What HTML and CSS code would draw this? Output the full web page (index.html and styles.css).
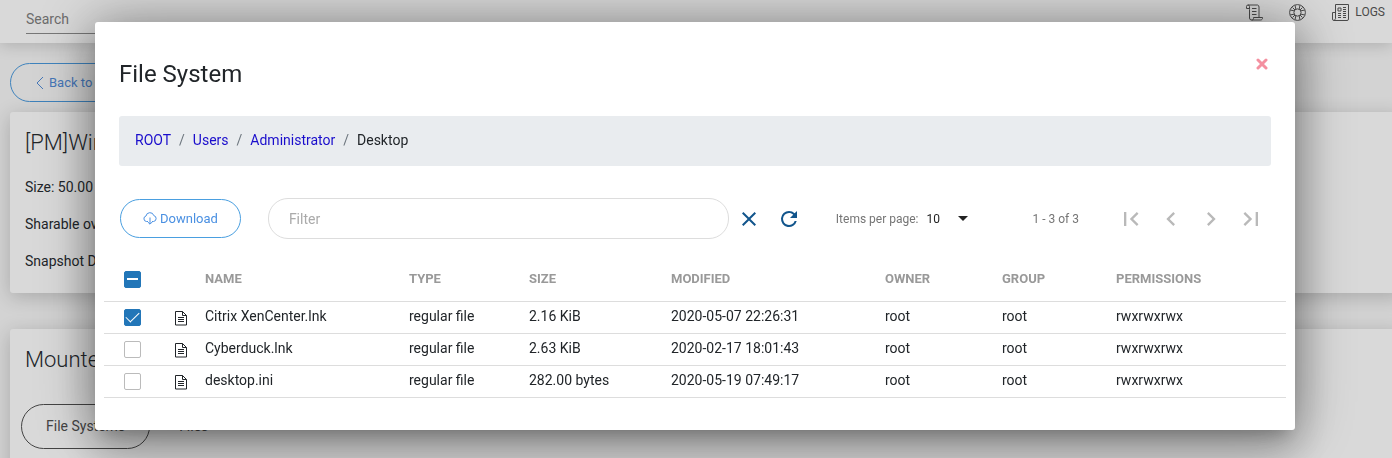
FILE: index.html
```html
<!DOCTYPE html>
<html lang="en">
<head>
<meta charset="utf-8">
<title>File System</title>
<link rel="stylesheet" href="styles.css">
</head>
<body>
<div class="page">
  <header class="topbar">
    <input class="search" type="text" placeholder="Search" aria-label="Search">
    <nav class="topnav">
      <a href="#" class="navlink" aria-label="Jobs"><svg width="17" height="17" viewBox="0 0 17 17"><path d="M3.500 5.500V2.500a1.500 1.500 0 0 0-3 0v2h3M2 1h9.500a2 2 0 0 1 1.500 2v10M3.500 5.500v8.500a2 2 0 0 0 2 2h9a2 2 0 0 0 2-2.500H7.500v1a1.500 1.500 0 0 1-2 1.500M6 4.500h4.500M6 7.500h4.500M6 10.500h4.500"/></svg></a>
      <a href="#" class="navlink" aria-label="Support"><svg width="17" height="17" viewBox="0 0 17 17"><circle cx="8.500" cy="8.500" r="7.900"/><circle cx="8.500" cy="8.500" r="3.600"/><path d="M6 1.200l.8 3.800M1.200 6l3.800.8M11 1.200l-.8 3.800M15.800 6l-3.800.8M6 15.800l.8-3.800M1.200 11l3.800-.8M11 15.800l-.8-3.800M15.800 11l-3.800-.8M3.500 3.500l2.500 2.500M13.500 3.500l-2.500 2.500M3.500 13.500l2.500-2.500M13.500 13.500l-2.500-2.500"/></svg></a>
      <a href="#" class="navlink"><svg width="17" height="17" viewBox="0 0 17 17"><path d="M3.500 14V.5h13v14.500a1.500 1.500 0 0 1-1.500 1.500H2A1.500 1.500 0 0 1 .5 15V8.500h3M3.500 14a1.500 1.500 0 0 1-1.500 2M6 4h3v3H6zM11 3.500h3M11 5.500h3M11 7.500h3M6 9.500h3M11 9.500h3M6 11.500h3M11 11.500h3M6 13.500h3M11 13.500h3"/></svg>LOGS</a>
    </nav>
  </header>
  <main class="content">
    <button class="pill back" type="button"><svg width="8" height="14" viewBox="0 0 8 14"><path d="M7 1L1 7l6 6"/></svg>Back to list</button>
    <section class="card summary">
      <h2>[PM]Win</h2>
      <p>Size: 50.00 GiB</p>
      <p>Sharable over</p>
      <p>Snapshot Date</p>
    </section>
    <section class="card mounted">
      <h2>Mounted</h2>
      <div class="tabs">
        <button class="tab active" type="button">File Systems</button>
        <button class="tab" type="button">Files</button>
      </div>
    </section>
  </main>
</div>

<div class="overlay">
  <div class="dialog" role="dialog" aria-labelledby="title">
    <div class="dialog-head">
      <h1 id="title">File System</h1>
      <button class="close" type="button" aria-label="Close"><svg width="12" height="12" viewBox="0 0 12 12"><path d="M2 2l8 8M10 2l-8 8"/></svg></button>
    </div>
    <nav class="crumbs" aria-label="Path">
      <a href="#">ROOT</a><span class="sep">/</span><a href="#">Users</a><span class="sep">/</span><a href="#">Administrator</a><span class="sep">/</span><span>Desktop</span>
    </nav>
    <div class="toolbar">
      <button class="pill download" type="button"><svg width="14" height="13" viewBox="0 0 14 13"><path d="M5 9.500H3.500a2.800 2.800 0 0 1-.5-5.500a4 4 0 0 1 7.800-.4a3 3 0 0 1-.3 5.900H9M7 5.500v6.500M4.800 10l2.200 2.200l2.200-2.200"/></svg>Download</button>
      <input class="filter" type="text" placeholder="Filter" aria-label="Filter">
      <button class="tool" type="button" aria-label="Clear filter"><svg width="24" height="24" viewBox="0 0 24 24"><path d="M19 6.410L17.590 5 12 10.590 6.410 5 5 6.410 10.590 12 5 17.590 6.410 19 12 13.410 17.590 19 19 17.590 13.410 12z"/></svg></button>
      <button class="tool" type="button" aria-label="Refresh"><svg width="24" height="24" viewBox="0 0 24 24"><path d="M17.650 6.350A7.958 7.958 0 0 0 12 4a8 8 0 1 0 7.730 10h-2.080A6 6 0 1 1 12 6c1.660 0 3.140.69 4.220 1.780L13 11h7V4z"/></svg></button>
      <div class="paginator">
        <label for="size">Items per page:</label>
        <span class="picker">
          <select id="size"><option>10</option><option>25</option><option>50</option></select>
          <svg width="10" height="5" viewBox="0 0 10 5"><path d="M0 0h10L5 5z"/></svg>
        </span>
        <span class="range">1 - 3 of 3</span>
        <div class="pager">
          <button type="button" disabled aria-label="First page"><svg width="28" height="28" viewBox="0 0 24 24"><path d="M18.410 16.590L13.820 12l4.590-4.590L17 6l-6 6 6 6zM6 6h2v12H6z"/></svg></button>
          <button type="button" disabled aria-label="Previous page"><svg width="28" height="28" viewBox="0 0 24 24"><path d="M15.410 7.410L14 6l-6 6 6 6 1.410-1.410L10.830 12z"/></svg></button>
          <button type="button" disabled aria-label="Next page"><svg width="28" height="28" viewBox="0 0 24 24"><path d="M10 6L8.590 7.410 13.170 12l-4.580 4.590L10 18l6-6z"/></svg></button>
          <button type="button" disabled aria-label="Last page"><svg width="28" height="28" viewBox="0 0 24 24"><path d="M5.590 7.410L10.180 12l-4.590 4.590L7 18l6-6-6-6zM16 6h2v12h-2z"/></svg></button>
        </div>
      </div>
    </div>
    <svg class="defs" aria-hidden="true"><symbol id="file" viewBox="0 0 12 15"><path d="M.5.5h7l4 4v9.500H.5zM7.500.5v4h4M3 6.500h6M3 8.500h6M3 10.500h6"/></symbol></svg>
    <table class="files">
      <colgroup><col class="c-check"><col class="c-icon"><col class="c-name"><col class="c-type"><col class="c-size"><col class="c-modified"><col class="c-owner"><col class="c-group"><col></colgroup>
      <thead>
        <tr><th class="check"><input type="checkbox" class="some" aria-label="Select all"></th><th></th><th>NAME</th><th>TYPE</th><th>SIZE</th><th>MODIFIED</th><th>OWNER</th><th>GROUP</th><th>PERMISSIONS</th></tr>
      </thead>
      <tbody>
        <tr><td class="check"><input type="checkbox" checked aria-label="Citrix XenCenter.lnk"></td><td class="icon"><svg width="12" height="15"><use href="#file"/></svg></td><td>Citrix XenCenter.lnk</td><td>regular file</td><td>2.16 KiB</td><td>2020-05-07 22:26:31</td><td>root</td><td>root</td><td>rwxrwxrwx</td></tr>
        <tr><td class="check"><input type="checkbox" aria-label="Cyberduck.lnk"></td><td class="icon"><svg width="12" height="15"><use href="#file"/></svg></td><td>Cyberduck.lnk</td><td>regular file</td><td>2.63 KiB</td><td>2020-02-17 18:01:43</td><td>root</td><td>root</td><td>rwxrwxrwx</td></tr>
        <tr><td class="check"><input type="checkbox" aria-label="desktop.ini"></td><td class="icon"><svg width="12" height="15"><use href="#file"/></svg></td><td>desktop.ini</td><td>regular file</td><td>282.00 bytes</td><td>2020-05-19 07:49:17</td><td>root</td><td>root</td><td>rwxrwxrwx</td></tr>
      </tbody>
    </table>
  </div>
</div>
</body>
</html>
```
FILE: styles.css
```css
* { box-sizing: border-box; }
body { margin: 0; font: 14px/20px Roboto, sans-serif; color: #212529; background: #d3d3d3; }
h1, h2, p { margin: 0; }
button, input, select { font: inherit; color: inherit; margin: 0; }
button { padding: 0; border: 0; background: none; cursor: pointer; }
a { text-decoration: none; }
svg { display: block; fill: none; stroke: currentColor; flex: none; }

.page { height: 100vh; overflow: hidden; }
.topbar { display: flex; justify-content: space-between; height: 43px; padding: 0 7px 0 26px; background: #d9d9d9; box-shadow: 0 2px 16px rgba(0, 0, 0, .18); }
.search { width: 200px; height: 34px; padding: 5px 0 0; border: 0; border-bottom: 1px solid #777; background: none; }
.search::placeholder { color: #6c6c6c; opacity: 1; }
.topnav { display: flex; gap: 26px; padding-top: 4px; }
.navlink { display: flex; gap: 6px; height: 17px; font-size: 12px; line-height: 17px; color: #4a4a4a; }
.content { padding: 20px 10px 0; }
.pill { display: flex; align-items: center; border: 1px solid #4a9fe0; border-radius: 20px; height: 39px; font-size: 13px; color: #4a90e2; }
.back { padding: 0 25px; gap: 5px; border-color: #3f83bd; color: #4677b8; }
.card { background: #d9d9d9; border-radius: 3px; box-shadow: 0 4px 20px rgba(0, 0, 0, .2); padding: 0 15px; margin-right: -20px; }
.card h2 { font-size: 22px; line-height: 28px; font-weight: 300; }
.summary { margin-top: 10px; padding-top: 17px; height: 181px; }
.summary h2 { margin-bottom: 20px; }
.summary p { margin-bottom: 17px; }
.mounted { margin-top: 36px; padding: 17px 11px 40px; }
.mounted h2 { padding-left: 4px; }
.tabs { display: flex; margin-top: 30px; }
.tab { height: 45px; padding: 0 24px 2px; border: 1px solid transparent; border-radius: 23px; color: #444; }
.tab.active { border-color: #444; }
.tab + .tab { margin-left: 4px; }

.overlay { position: fixed; inset: 0; display: flex; justify-content: center; align-items: flex-start; padding: 22px 18px 0 16px; }
.dialog { flex: 0 1 1200px; min-width: 0; padding: 32px 9px; background: #fff; border-radius: 3px; box-shadow: 0 11px 15px -7px rgba(0, 0, 0, .2), 0 24px 38px 3px rgba(0, 0, 0, .14), 0 9px 46px 8px rgba(0, 0, 0, .12), 0 0 60px rgba(0, 0, 0, .3); }
.dialog-head { display: flex; justify-content: space-between; padding: 0 18px 0 15px; }
h1 { font-size: 24px; line-height: 40px; font-weight: 400; }
.close { align-self: flex-start; padding-top: 4px; color: #f490a0; }
.close svg { stroke-width: 3; stroke-linecap: round; }
.crumbs { display: flex; margin: 22px 15px 0; padding: 14px 16px 16px; background: #e9ecef; border-radius: 3px; }
.crumbs a { color: #1a0dcc; }
.sep { padding: 0 8px; color: #6c757d; }
.toolbar { display: flex; align-items: center; margin-top: 32px; padding: 0 15px 0 16px; }
.download { padding: 0 22px; gap: 3px; }
.filter { flex: 1 1 460px; min-width: 80px; height: 41px; margin: 0 8px 0 27px; padding: 0 20px; border: 1px solid #ddd; border-radius: 20px; }
.filter::placeholder { color: #aaa; opacity: 1; }
.tool { margin-right: 16px; color: #12558c; }
.tool svg, .pager svg, .picker svg { fill: currentColor; stroke: none; }
.paginator { display: flex; align-items: center; margin-left: 19px; font-size: 12px; color: #757575; white-space: nowrap; }
.picker { display: flex; align-items: center; gap: 17px; margin-left: 8px; color: #222; }
.picker select { appearance: none; border: 0; padding: 0; background: none; }
.range { margin: 0 32px 0 65px; }
.pager { display: flex; color: #b9b9b9; }
.pager button { display: flex; justify-content: center; width: 40px; color: inherit; }
.defs { width: 0; height: 0; }
.files { width: 100%; margin-top: 17px; border-collapse: collapse; table-layout: fixed; }
.c-check { width: 70px; }
.c-icon { width: 31px; }
.c-name { width: 204px; }
.c-type { width: 120px; }
.c-size { width: 142px; }
.c-modified { width: 214px; }
.c-owner { width: 117px; }
.c-group { width: 114px; }
th, td { padding: 0; text-align: left; border-bottom: 1px solid #ddd; }
th { height: 45px; padding-top: 2px; font-size: 13px; font-weight: 700; color: #999; }
td { height: 32px; padding-bottom: 2px; }
.files .check { padding: 0 0 0 20px; }
.files th.check { padding-top: 2px; }
.files .icon { padding: 2px 0 0 1px; }
.check input { display: grid; place-items: center; appearance: none; width: 17px; height: 17px; border: 1px solid #bbb; border-radius: 2px; background: #fff; }
.check .some, .check input:checked { border-color: #2276b8; background: #2276b8; }
.check .some::after { content: ""; width: 11px; height: 2px; background: #fff; }
.check input:checked::after { content: ""; width: 12px; height: 6px; margin-bottom: 3px; border: solid #fff; border-width: 0 0 1px 1px; transform: rotate(-45deg); }
```
